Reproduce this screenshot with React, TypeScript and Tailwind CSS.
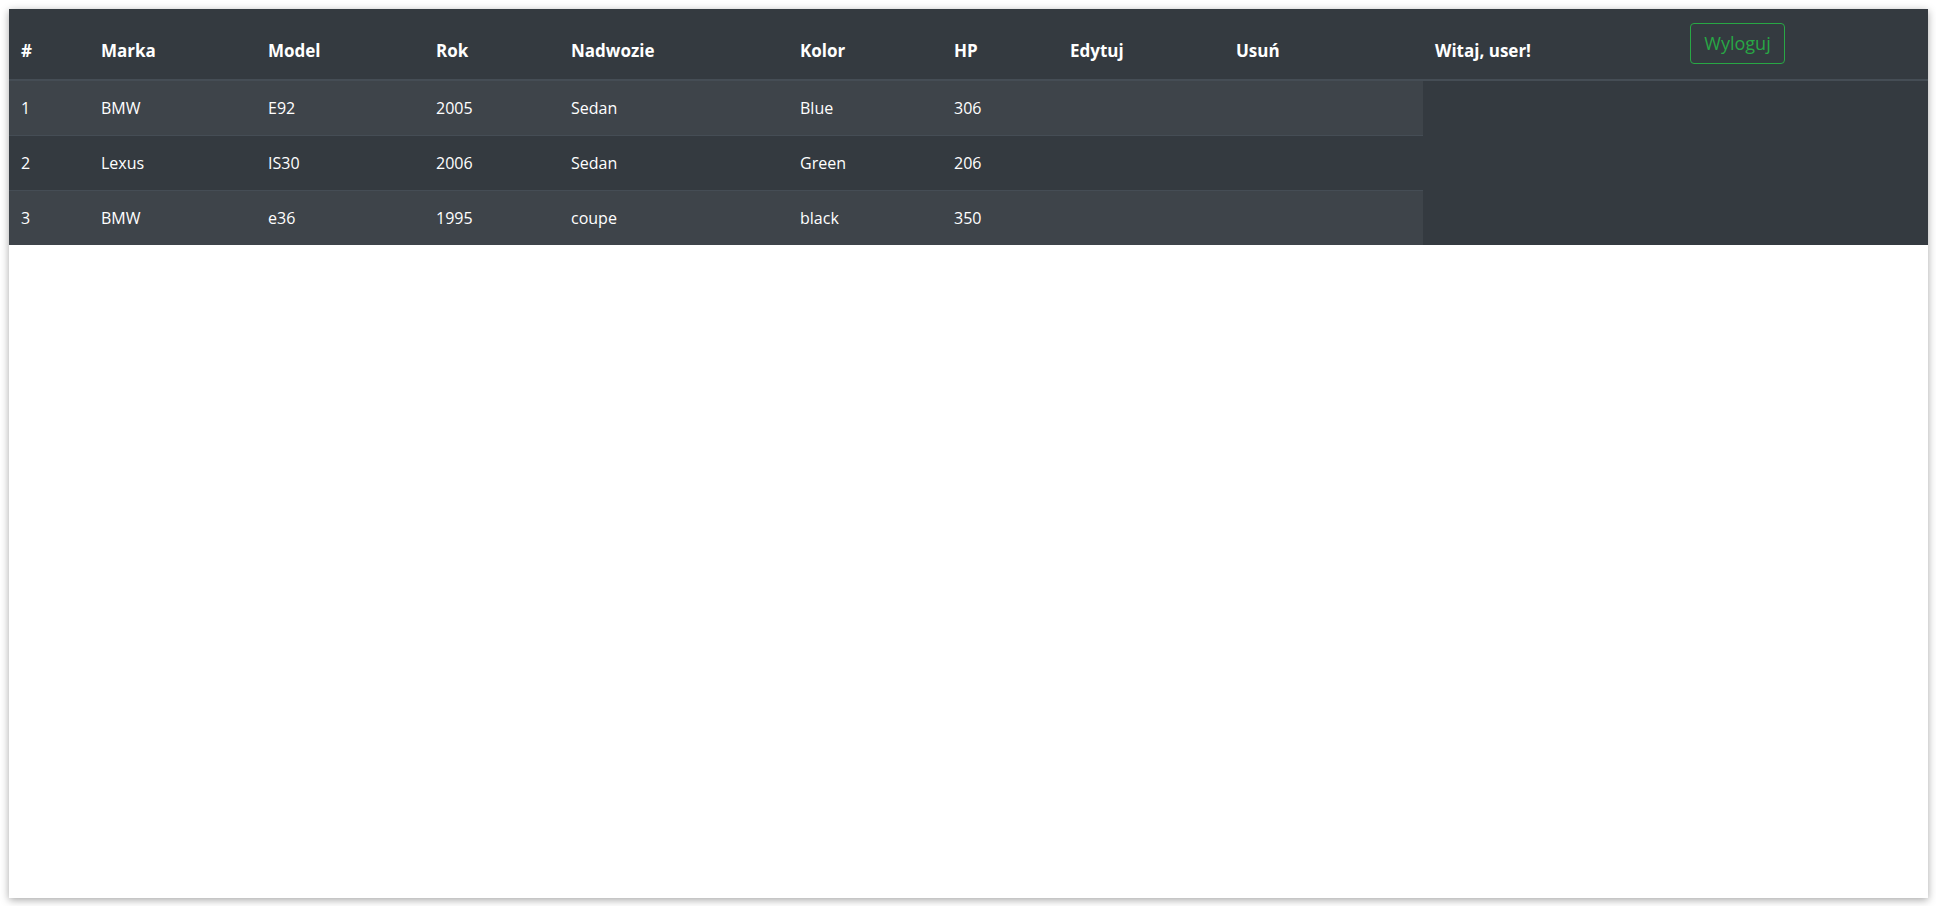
const cols = [80, 167, 168, 135, 229, 154, 116, 166, 199];

const headers = ["#", "Marka", "Model", "Rok", "Nadwozie", "Kolor", "HP", "Edytuj", "Usuń"];

const cars = [
  { id: 1, marka: "BMW", model: "E92", rok: 2005, nadwozie: "Sedan", kolor: "Blue", hp: 306 },
  { id: 2, marka: "Lexus", model: "IS30", rok: 2006, nadwozie: "Sedan", kolor: "Green", hp: 206 },
  { id: 3, marka: "BMW", model: "e36", rok: 1995, nadwozie: "coupe", kolor: "black", hp: 350 },
];

export default function App() {
  return (
    <div
      className="h-[906px] w-full bg-white pt-[9px] pl-[9px] pr-[8px] pb-[8px]"
      style={{ fontFamily: '"Segoe UI", "Open Sans", "Noto Sans", sans-serif' }}
    >
      <div className="h-full bg-white shadow-[0_2px_8px_rgba(0,0,0,0.35)]">
        <div className="bg-[#343a40] text-white text-[16px] leading-6">
          {/* header */}
          <div className="flex h-[72px] border-b-2 border-[#454d55] text-[17px] font-bold">
            {headers.map((h, i) => (
              <div key={h} className="flex items-end px-3 pb-4 shrink-0" style={{ width: cols[i] }}>
                {h}
              </div>
            ))}
            <div className="flex w-[255px] shrink-0 items-end px-3 pb-4">Witaj, user!</div>
            <div className="flex flex-1 items-center px-3 pb-[2px]">
              <button className="h-[41px] w-[95px] rounded border border-[#28a745] text-[18px] font-normal text-[#28a745]">
                Wyloguj
              </button>
            </div>
          </div>

          {/* rows */}
          <div className="w-[1414px]">
            {cars.map((c, r) => (
              <div
                key={c.id}
                className={`flex items-center ${r === 0 ? "h-[54px]" : "h-[55px] border-t border-[#454d55]"} ${
                  r % 2 === 0 ? "bg-[#3e444a]" : ""
                }`}
              >
                {[c.id, c.marka, c.model, c.rok, c.nadwozie, c.kolor, c.hp, "", ""].map((v, i) => (
                  <div key={i} className="px-3 shrink-0" style={{ width: cols[i] }}>
                    {v}
                  </div>
                ))}
              </div>
            ))}
          </div>
        </div>
      </div>
    </div>
  );
}
